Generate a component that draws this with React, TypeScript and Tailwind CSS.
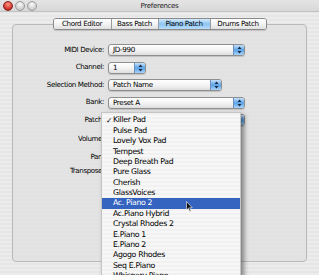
import React from "react";

const font = { fontFamily: '"DejaVu Sans", "Noto Sans", sans-serif' };

const rows = [
  { label: "MIDI Device:", value: "JD-990", width: "w-[137px]" },
  { label: "Channel:", value: "1", width: "w-[38px]" },
  { label: "Selection Method:", value: "Patch Name", width: "w-[114px]" },
  { label: "Bank:", value: "Preset A", width: "w-[137px]" },
  { label: "Patch:", value: "Killer Pad", width: "w-[137px]" },
];

const patches = [
  "Killer Pad",
  "Pulse Pad",
  "Lovely Vox Pad",
  "Tempest",
  "Deep Breath Pad",
  "Pure Glass",
  "Cherish",
  "GlassVoices",
  "Ac. Piano 2",
  "Ac.Piano Hybrid",
  "Crystal Rhodes 2",
  "E.Piano 1",
  "E.Piano 2",
  "Agogo Rhodes",
  "Seq E.Piano",
  "Whispery Piano",
];

const tabs = [
  { name: "Chord Editor", width: "w-[57px]" },
  { name: "Bass Patch", width: "w-[47px]" },
  { name: "Piano Patch", width: "w-[52px]", active: true },
  { name: "Drums Patch", width: "w-[56px]" },
];

function Arrows() {
  return (
    <svg width="5" height="8" viewBox="0 0 5 8" aria-hidden="true">
      <path d="M2.5 0.5L4.5 3H0.5Z M2.5 7.5L4.5 5H0.5Z" fill="#1b2b44" />
    </svg>
  );
}

function Popup({ value, width }: { value: string; width: string }) {
  return (
    <div
      className={`${width} flex h-[12px] items-stretch overflow-hidden rounded-[3px] border border-[#8e8e8e] bg-gradient-to-b from-[#ffffff] via-[#f4f4f4] to-[#dedede] shadow-[0_1px_1px_rgba(0,0,0,0.15)]`}
    >
      <span className="flex-1 truncate pl-[4px] text-[7.2px] leading-[10px] tracking-[-0.35px] text-black">{value}</span>
      <span className="flex w-[11px] items-center justify-center border-l border-[#6a8fbf] bg-gradient-to-b from-[#c6e2fb] via-[#5aa2e6] to-[#a8d3f8]">
        <Arrows />
      </span>
    </div>
  );
}

function Label({ children }: { children: React.ReactNode }) {
  return <span className="w-[91px] text-right text-[7.1px] tracking-[-0.4px] text-black">{children}</span>;
}

export default function App() {
  return (
    <div
      className="relative h-[275px] w-[319px] overflow-hidden bg-[repeating-linear-gradient(0deg,#ececec_0px,#ececec_2px,#e6e6e6_2px,#e6e6e6_4px)]"
      style={font}
    >
      {/* title bar */}
      <div className="flex h-[12px] items-center border-b border-[#c2c2c2] bg-gradient-to-b from-[#e4e4e4] to-[#d8d8d8]">
        <div className="flex w-[40px] items-center gap-[2px] pl-[3px]">
          <span className="h-[10px] w-[10px] rounded-full border border-[#8c2020] bg-[radial-gradient(circle_at_50%_30%,#ff9a8a,#d23a2e_60%,#a11c14)]" />
          <span className="h-[10px] w-[10px] rounded-full border border-[#9a9a9a] bg-[radial-gradient(circle_at_50%_30%,#fafafa,#d4d4d4_60%,#bdbdbd)]" />
          <span className="h-[10px] w-[10px] rounded-full border border-[#9a9a9a] bg-[radial-gradient(circle_at_50%_30%,#fafafa,#d4d4d4_60%,#bdbdbd)]" />
        </div>
        <div className="flex-1 text-center text-[7px] leading-[12px] tracking-[-0.3px] text-[#222]">Preferences</div>
        <div className="w-[40px]" />
      </div>

      {/* tabs */}
      <div className="relative z-10 mt-[6px] flex justify-center">
        <div className="flex h-[12px] overflow-hidden rounded-[3px] border border-[#8a8a8a] shadow-[0_1px_1px_rgba(0,0,0,0.15)]">
          {tabs.map((t, i) => (
            <div
              key={t.name}
              className={`${t.width} flex items-center justify-center text-[7.1px] leading-[10px] tracking-[-0.35px] text-black ${
                i > 0 ? "border-l border-[#9a9a9a]" : ""
              } ${
                t.active
                  ? "bg-gradient-to-b from-[#d6ebfc] via-[#8cc4f2] to-[#b9dcfa]"
                  : "bg-gradient-to-b from-[#ffffff] via-[#f3f3f3] to-[#e0e0e0]"
              }`}
            >
              {t.name}
            </div>
          ))}
        </div>
      </div>

      {/* pane */}
      <div className="mx-[12px] -mt-[6px] h-[238px] rounded-[4px] border border-[#b9b9b9] bg-[#e1e1e1]/80 pt-[19px]">
        <div className="flex flex-col gap-[5.5px]">
          {rows.map((r) => (
            <div key={r.label} className="flex h-[12px] items-center">
              <Label>{r.label}</Label>
              <div className="ml-[4px]">
                <Popup value={r.value} width={r.width} />
              </div>
            </div>
          ))}
        </div>
        <div className="mt-[7px] flex h-[12px] items-center">
          <Label>Volume:</Label>
        </div>
        <div className="mt-[6px] flex h-[12px] items-center">
          <Label>Pan:</Label>
        </div>
        <div className="mt-[2px] flex h-[12px] items-center">
          <Label>Transpose:</Label>
        </div>
      </div>

      {/* open patch menu */}
      <div className="absolute left-[101px] top-[112px] w-[140px] border border-b-0 border-[#c4c4c4] bg-[repeating-linear-gradient(0deg,#f7f7f7_0px,#f7f7f7_2px,#f1f1f1_2px,#f1f1f1_4px)] pt-[2px] shadow-[3px_3px_5px_rgba(0,0,0,0.45)]">
        {patches.map((p, i) => (
          <div
            key={p}
            className={`relative flex h-[10.4px] items-center pl-[11px] text-[7.8px] tracking-[-0.35px] ${
              i === 8 ? "bg-[#3563c0] text-white" : "text-black"
            }`}
          >
            {i === 0 && <span className="absolute left-[4px] text-[7.5px]">✓</span>}
            {p}
          </div>
        ))}
      </div>

      {/* mouse pointer */}
      <svg className="absolute left-[186px] top-[201px]" width="7" height="11" viewBox="0 0 7 11" aria-hidden="true">
        <path d="M0.5 0.5V9L2.4 7.2L3.8 10.4L5 9.9L3.6 6.7H6.2Z" fill="#111" stroke="#fff" strokeWidth="0.6" />
      </svg>
    </div>
  );
}
